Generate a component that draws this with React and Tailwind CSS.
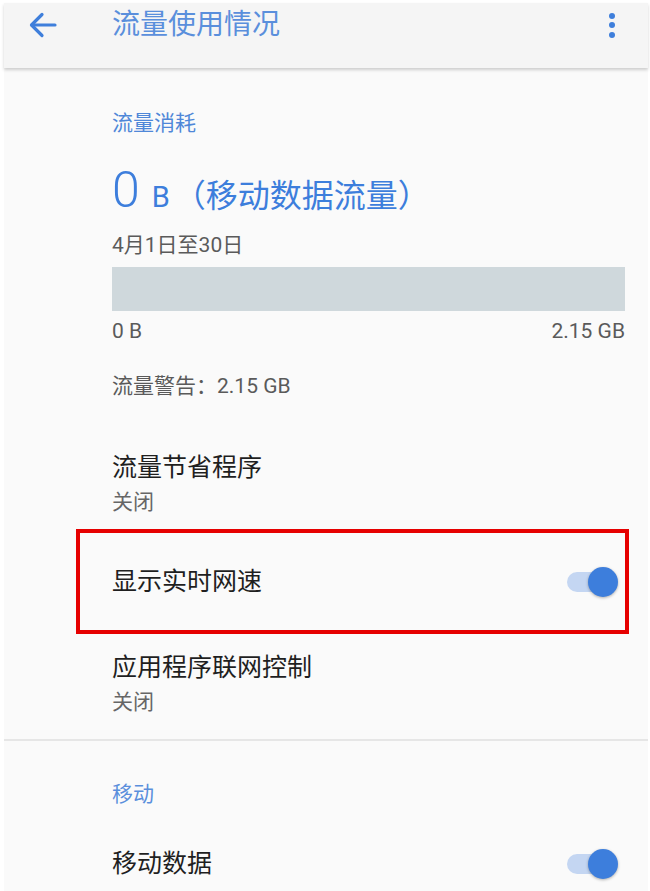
import React from "react";

const FONT = { fontFamily: "Roboto, 'Noto Sans CJK SC', sans-serif" };

function BackArrow() {
  return (
    <svg width="28" height="26" viewBox="0 0 28 26" fill="none" stroke="#3f7fdb" strokeWidth="3.2" strokeLinecap="round" strokeLinejoin="round">
      <path d="M26 13H3" />
      <path d="M13 2.5L2.5 13L13 23.5" />
    </svg>
  );
}

function MoreDots() {
  return (
    <div className="flex flex-col items-center gap-[3.5px]">
      <span className="w-[6px] h-[6px] rounded-full bg-[#3f7fdb]" />
      <span className="w-[6px] h-[6px] rounded-full bg-[#3f7fdb]" />
      <span className="w-[6px] h-[6px] rounded-full bg-[#3f7fdb]" />
    </div>
  );
}

function Toggle() {
  return (
    <div className="relative w-[51px] h-[30px] shrink-0">
      <div className="absolute left-0 top-[5px] w-[45px] h-[20px] rounded-full bg-[#c4d6f2]" />
      <div className="absolute right-0 top-0 w-[30px] h-[30px] rounded-full bg-[#3d7edc] shadow-[0_1px_3px_rgba(0,0,0,0.3)]" />
    </div>
  );
}

export default function App() {
  return (
    <div className="w-[650px] h-[891px] bg-white pl-[4px] pt-[3px] pr-[2px] overflow-hidden" style={FONT}>
      <div className="h-full bg-[#fafafa] flex flex-col">
        {/* Toolbar */}
        <div className="h-[65px] shrink-0 bg-[#f5f5f5] shadow-[0_2px_3px_rgba(0,0,0,0.18)] relative z-10">
          <div className="h-[44px] flex items-center">
            <div className="w-[108px] pl-[25px] flex items-center">
              <BackArrow />
            </div>
            <h1 className="flex-1 text-[28px] leading-[32px] text-[#5a8fdc]">流量使用情况</h1>
            <div className="w-[14px] mr-[29px] flex justify-center">
              <MoreDots />
            </div>
          </div>
        </div>

        {/* Usage summary */}
        <div className="pl-[108px] pr-[23px]">
          <div className="mt-[43px] text-[21px] leading-[24px] text-[#4f87d8]">流量消耗</div>
          <div className="mt-[30px] h-[50px] flex items-baseline text-[#3d7edc]">
            <span className="text-[50px] leading-[50px] font-light">0</span>
            <span className="ml-[12px] text-[29px] leading-[50px]">B</span>
            <span className="ml-[4px] text-[32px] leading-[50px]">（移动数据流量）</span>
          </div>
          <div className="mt-[18px] text-[21px] leading-[24px] text-[#5a5a5a]">4月1日至30日</div>
          <div className="mt-[10px] h-[44px] bg-[#cfd8dc]" />
          <div className="mt-[8px] flex justify-between text-[21px] leading-[24px] text-[#5a5a5a]">
            <span>0 B</span>
            <span>2.15 GB</span>
          </div>
          <div className="mt-[31px] text-[21px] leading-[24px] text-[#5a5a5a]">流量警告：2.15 GB</div>
          <div className="mt-[55px] text-[25px] leading-[30px] text-[#1f1f1f]">流量节省程序</div>
          <div className="mt-[7px] text-[21px] leading-[24px] text-[#666666]">关闭</div>
        </div>

        {/* Highlighted row */}
        <div className="mt-[15px] ml-[72px] mr-[19px] h-[105px] border-[4px] border-[#e60000] flex items-center justify-between pl-[32px] pr-[7px]">
          <span className="text-[25px] leading-[30px] text-[#1f1f1f]">显示实时网速</span>
          <Toggle />
        </div>

        <div className="pl-[108px] pr-[23px]">
          <div className="mt-[19px] text-[25px] leading-[30px] text-[#1f1f1f]">应用程序联网控制</div>
          <div className="mt-[7px] text-[21px] leading-[24px] text-[#666666]">关闭</div>
        </div>

        <div className="mt-[25px] h-[2px] bg-[#e6e6e6]" />

        {/* Mobile section */}
        <div className="pl-[108px] pr-[30px]">
          <div className="mt-[41px] text-[21px] leading-[24px] text-[#5a8fdc]">移动</div>
          <div className="mt-[38px] h-[40px] flex items-center justify-between">
            <span className="text-[25px] leading-[30px] text-[#1f1f1f]">移动数据</span>
            <Toggle />
          </div>
        </div>
      </div>
    </div>
  );
}
